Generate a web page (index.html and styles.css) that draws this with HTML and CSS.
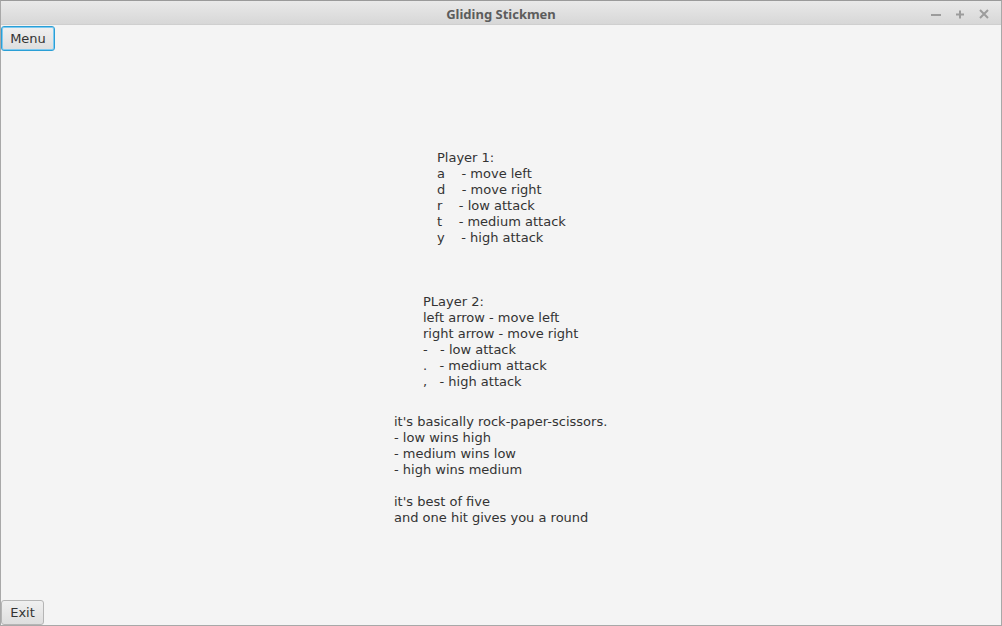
FILE: index.html
```html
<!DOCTYPE html>
<html>
<head>
<meta charset="utf-8">
<link rel="stylesheet" href="styles.css">
</head>
<body>
<div class="window">
  <div class="titlebar">
    <span class="title">Gliding Stickmen</span>
    <div class="controls">
      <svg class="ctl" width="12" height="12" viewBox="0 0 12 12"><path d="M1 7h10" stroke="#9c9c9c" stroke-width="2"/></svg>
      <svg class="ctl" width="12" height="12" viewBox="0 0 12 12"><path d="M2 6.5h8M6 2.5v8" stroke="#9c9c9c" stroke-width="2"/></svg>
      <svg class="ctl" width="12" height="12" viewBox="0 0 12 12"><path d="M2 2l8 8M10 2l-8 8" stroke="#9c9c9c" stroke-width="2"/></svg>
    </div>
  </div>
  <div class="content">
    <button class="btn btn-focus">Menu</button>
    <div class="text p1">Player 1:
a    - move left
d    - move right
r    - low attack
t    - medium attack
y    - high attack</div>
    <div class="text p2">PLayer 2:
left arrow - move left
right arrow - move right
-   - low attack
.   - medium attack
,   - high attack</div>
    <div class="text p3">it's basically rock-paper-scissors.
- low wins high
- medium wins low
- high wins medium

it's best of five
and one hit gives you a round</div>
    <button class="btn btn-exit">Exit</button>
  </div>
</div>
</body>
</html>
```
FILE: styles.css
```css
html, body {
  margin: 0;
  padding: 0;
  background: #f4f4f4;
}
.window {
  width: 1002px;
  height: 626px;
  box-sizing: border-box;
  border: 1px solid #a8a8a8;
  border-top: 1px solid #9a9a9a;
  display: flex;
  flex-direction: column;
  background: #f4f4f4;
  overflow: hidden;
}
.titlebar {
  height: 23px;
  flex: none;
  background: linear-gradient(#e9e9e9, #d7d7d7);
  border-bottom: 1px solid #cfcfcf;
  display: flex;
  align-items: center;
  justify-content: center;
  position: relative;
}
.title {
  font-family: "Noto Sans", "Open Sans", sans-serif;
  font-weight: bold;
  font-size: 13px;
  color: #5c5c5c;
  margin-top: 3px;
}
.controls {
  position: absolute;
  right: 11px;
  top: 7px;
  display: flex;
  gap: 12px;
}
.ctl { display: block; }
.content {
  flex: 1;
  display: flex;
  flex-direction: column;
  align-items: flex-start;
}
.btn {
  font-family: "DejaVu Sans", sans-serif;
  font-size: 13px;
  color: #333;
  height: 25px;
  padding: 0 8px;
  border-radius: 3px;
  background: linear-gradient(#f0f0f0, #dedede);
  box-sizing: border-box;
  line-height: 23px;
  margin: 0;
}
.btn-focus {
  margin-top: 1px;
  border: 1px solid #2a9fd6;
  box-shadow: inset 0 0 0 1px #7fcaf0;
  width: 54px;
}
.btn-exit {
  margin-top: auto;
  border: 1px solid #b5b5b5;
  width: 43px;
}
.text {
  font-family: "DejaVu Sans", sans-serif;
  font-size: 13px;
  line-height: 16px;
  color: #333;
  white-space: pre;
}
.p1 { margin-top: 99px; margin-left: 436px; }
.p2 { margin-top: 48px; margin-left: 422px; }
.p3 { margin-top: 24px; margin-left: 393px; }
```
